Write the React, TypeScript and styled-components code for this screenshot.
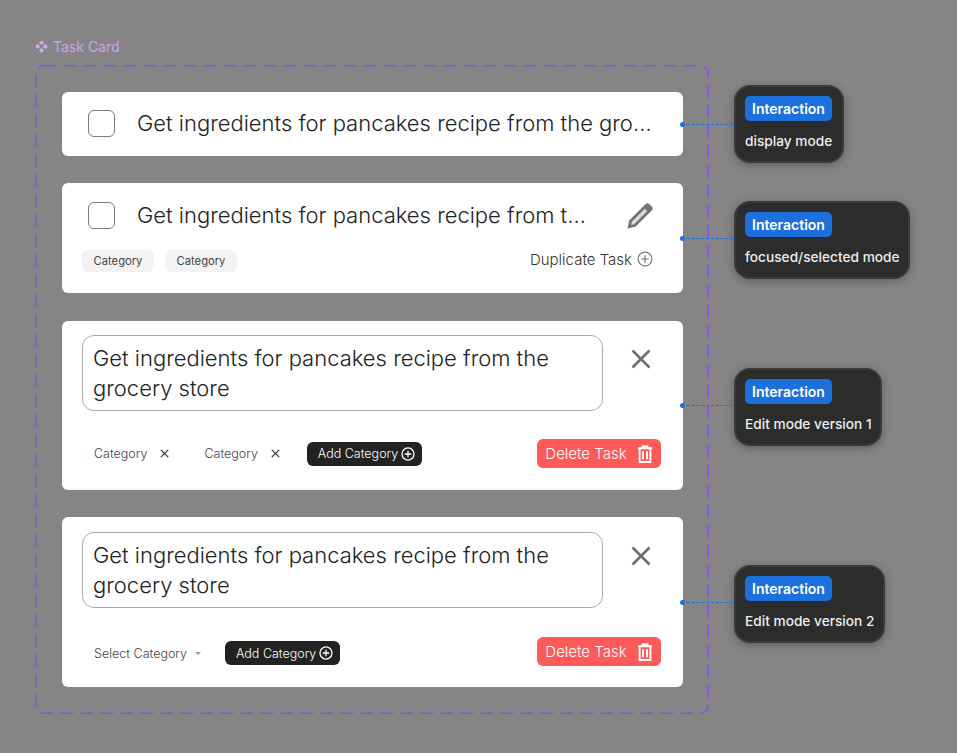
import React from "react";
import styled, { createGlobalStyle } from "styled-components";

const TITLE = "Get ingredients for pancakes recipe from the grocery store";

const GlobalStyle = createGlobalStyle`
  html, body {
    margin: 0;
    padding: 0;
    background: #858585;
    font-family: "Inter", "Liberation Sans", sans-serif;
  }
`;

const PencilIcon = () => (
  <svg width="26" height="26" viewBox="2 2.5 22 22" fill="none">
    <path d="M2.5 24l1.3-6.6L17.6 3.6a2.4 2.4 0 0 1 3.4 0l1.9 1.9a2.4 2.4 0 0 1 0 3.4L9.1 22.7z" fill="#737373" />
    <path d="M5.6 20.9l.5-2.6L17 7.4l2 2L8.1 20.4z" fill="#fff" opacity="0.75" />
  </svg>
);

const CloseIcon = () => (
  <svg width="20" height="20" viewBox="0 0 20 20" fill="none">
    <path d="M1.5 1.5l17 17M18.5 1.5l-17 17" stroke="#6f6f6f" strokeWidth="2.6" />
  </svg>
);

const SmallCloseIcon = () => (
  <svg width="9" height="9" viewBox="0 0 9 9" fill="none">
    <path d="M.8.8l7.4 7.4M8.2.8L.8 8.2" stroke="#333" strokeWidth="1.2" />
  </svg>
);

const PlusCircle = ({ size, color, weight }: { size: number; color: string; weight: number }) => (
  <svg width={size} height={size} viewBox="0 0 16 16" fill="none">
    <circle cx="8" cy="8" r="6.9" stroke={color} strokeWidth={weight} />
    <path d="M8 4.2v7.6M4.2 8h7.6" stroke={color} strokeWidth={weight} />
  </svg>
);

const TrashIcon = () => (
  <svg width="16" height="18" viewBox="0 0 16 18" fill="none">
    <path d="M1 3.2h14M5.5 3V1.2h5V3M2.6 3.2V17h10.8V3.2M6 6.2v8M10 6.2v8" stroke="#fff" strokeWidth="1.9" />
  </svg>
);

const ComponentIcon = () => (
  <svg width="13" height="13" viewBox="0 0 13 13" fill="#cfa8f2">
    <path d="M6.5.2l2.2 2a.6.6 0 0 1 0 .9l-2.2 2.1-2.2-2.1a.6.6 0 0 1 0-.9zM6.5 7.8l2.2 2.1a.6.6 0 0 1 0 .9l-2.2 2-2.2-2a.6.6 0 0 1 0-.9zM2.7 4l2.2 2.1a.6.6 0 0 1 0 .8L2.7 9 .5 6.9a.6.6 0 0 1 0-.8zM10.3 4l2.2 2.1a.6.6 0 0 1 0 .8L10.3 9 8.1 6.9a.6.6 0 0 1 0-.8z" />
  </svg>
);

const App: React.FC = () => {
  return (
    <Page>
      <GlobalStyle />
      <FrameLabel>
        <ComponentIcon />
        Task Card
      </FrameLabel>
      <Frame>
        <DashedOutline>
          <rect
            x="0.75"
            y="0.75"
            width="672.5"
            height="647.5"
            rx="8"
            fill="none"
            stroke="#8a4fe8"
            strokeWidth="1.5"
            strokeDasharray="13 7"
          />
        </DashedOutline>

        <Row>
          <Card $height={64}>
            <TitleRow $padding="18px 21px 0 26px">
              <Checkbox />
              <Title>{TITLE}</Title>
            </TitleRow>
          </Card>
          <Note title="display mode" shift={0} />
        </Row>

        <Row $extraGap={1}>
          <Card $height={110}>
            <TitleRow $padding="19px 30px 0 26px">
              <Checkbox />
              <Title>{TITLE}</Title>
              <EditButton>
                <PencilIcon />
              </EditButton>
            </TitleRow>
            <ChipRow>
              <Chip>Category</Chip>
              <Chip>Category</Chip>
              <Duplicate>
                Duplicate Task
                <PlusCircle size={16} color="#757575" weight={1.2} />
              </Duplicate>
            </ChipRow>
          </Card>
          <Note title="focused/selected mode" shift={2} />
        </Row>

        <Row>
          <Card $height={169}>
            <EditRow $top={14}>
              <TitleInput>{TITLE}</TitleInput>
              <CloseButton>
                <CloseIcon />
              </CloseButton>
            </EditRow>
            <ActionRow $top={28}>
              <Category>
                Category
                <SmallCloseIcon />
              </Category>
              <Category>
                Category
                <SmallCloseIcon />
              </Category>
              <AddButton>
                Add Category
                <PlusCircle size={14} color="#fff" weight={1.5} />
              </AddButton>
              <DeleteButton>
                Delete Task
                <TrashIcon />
              </DeleteButton>
            </ActionRow>
          </Card>
          <Note title="Edit mode version 1" shift={1} />
        </Row>

        <Row>
          <Card $height={170}>
            <EditRow $top={15}>
              <TitleInput>{TITLE}</TitleInput>
              <CloseButton>
                <CloseIcon />
              </CloseButton>
            </EditRow>
            <ActionRow $top={29}>
              <SelectCategory>
                Select Category
                <Caret />
              </SelectCategory>
              <AddButton $drop={3}>
                Add Category
                <PlusCircle size={14} color="#fff" weight={1.5} />
              </AddButton>
              <DeleteButton>
                Delete Task
                <TrashIcon />
              </DeleteButton>
            </ActionRow>
          </Card>
          <Note title="Edit mode version 2" shift={2} />
        </Row>
      </Frame>
    </Page>
  );
};

const Note: React.FC<{ title: string; shift: number }> = ({ title, shift }) => (
  <>
    <Connector />
    <Callout $shift={shift}>
      <Badge>Interaction</Badge>
      <CalloutText>{title}</CalloutText>
    </Callout>
  </>
);

const Page = styled.div`
  width: 957px;
  height: 753px;
  padding: 38px 0 0 35px;
  box-sizing: border-box;
  overflow: hidden;
`;
const FrameLabel = styled.div`
  display: flex;
  align-items: center;
  gap: 5px;
  height: 17px;
  margin-bottom: 10px;
  color: #c9a3ee;
  font-size: 14px;
`;
const Frame = styled.div`
  position: relative;
  width: 674px;
  height: 649px;
  box-sizing: border-box;
  padding: 27px;
  display: flex;
  flex-direction: column;
  gap: 27px;
`;
const DashedOutline = styled.svg`
  position: absolute;
  inset: 0;
  width: 674px;
  height: 649px;
`;
const Row = styled.div<{ $extraGap?: number }>`
  position: relative;
  display: flex;
  align-items: center;
  width: 860px;
  margin-bottom: ${(p) => p.$extraGap ?? 0}px;
`;
const Card = styled.div<{ $height: number }>`
  flex: none;
  width: 621px;
  height: ${(p) => p.$height}px;
  box-sizing: border-box;
  background: #fff;
  border-radius: 6px;
  overflow: hidden;
`;
const TitleRow = styled.div<{ $padding: string }>`
  display: flex;
  align-items: center;
  padding: ${(p) => p.$padding};
`;
const Checkbox = styled.div`
  flex: none;
  width: 27px;
  height: 27px;
  box-sizing: border-box;
  border: 1.5px solid #7a7a7a;
  border-radius: 6px;
  margin-right: 22px;
`;
const Title = styled.div`
  flex: 1;
  min-width: 0;
  white-space: nowrap;
  overflow: hidden;
  text-overflow: ellipsis;
  color: #222;
  font-size: 22px;
  font-weight: 350;
  line-height: 27px;
`;
const EditButton = styled.div`
  flex: none;
  display: flex;
  margin-left: 30px;
`;
const ChipRow = styled.div`
  display: flex;
  align-items: center;
  gap: 11px;
  padding: 21px 30px 0 20px;
`;
const Chip = styled.div`
  display: flex;
  align-items: center;
  justify-content: center;
  width: 72px;
  height: 22px;
  background: #f3f3f3;
  border-radius: 6px;
  color: #444;
  font-size: 11.2px;
`;
const Duplicate = styled.div`
  margin-left: auto;
  margin-top: -4px;
  display: flex;
  align-items: center;
  gap: 5px;
  color: #333;
  font-size: 15px;
  font-weight: 350;
`;
const EditRow = styled.div<{ $top: number }>`
  display: flex;
  align-items: flex-start;
  padding: ${(p) => p.$top}px 0 0 20px;
`;
const TitleInput = styled.div`
  flex: none;
  width: 521px;
  height: 76px;
  box-sizing: border-box;
  padding: 7px 10px;
  border: 1px solid #aaa;
  border-radius: 12px;
  color: #222;
  font-size: 22px;
  font-weight: 350;
  line-height: 30px;
`;
const CloseButton = styled.div`
  display: flex;
  margin: 14px 0 0 28px;
`;
const ActionRow = styled.div<{ $top: number }>`
  display: flex;
  align-items: center;
  padding: ${(p) => p.$top}px 22px 0 32px;
`;
const Category = styled.div`
  display: flex;
  align-items: center;
  gap: 13px;
  margin-right: 35px;
  color: #444;
  font-size: 12.5px;
  font-weight: 350;
  &:nth-child(2) {
    margin-right: 27px;
  }
`;
const SelectCategory = styled.div`
  display: flex;
  align-items: center;
  gap: 8px;
  margin-top: 3px;
  margin-right: 24px;
  color: #444;
  font-size: 12.5px;
  font-weight: 350;
`;
const Caret = styled.span`
  width: 0;
  height: 0;
  border-left: 3px solid transparent;
  border-right: 3px solid transparent;
  border-top: 3px solid #999;
`;
const AddButton = styled.div<{ $drop?: number }>`
  display: flex;
  align-items: center;
  gap: 3px;
  width: 115px;
  height: 24px;
  box-sizing: border-box;
  margin-top: ${(p) => p.$drop ?? 0}px;
  padding-left: 11px;
  background: #222;
  border-radius: 6px;
  color: #fff;
  font-size: 12.5px;
  font-weight: 350;
`;
const DeleteButton = styled.div`
  margin-left: auto;
  display: flex;
  align-items: center;
  justify-content: center;
  gap: 10px;
  width: 124px;
  height: 29px;
  background: #ff5a5a;
  border-radius: 6px;
  color: #fff;
  font-size: 15px;
  font-weight: 350;
`;
const Connector = styled.div`
  position: relative;
  flex: none;
  width: 51px;
  height: 0;
  margin-left: -1px;
  border-top: 1px dashed #1d6fdc;
  &::before {
    content: "";
    position: absolute;
    left: -2px;
    top: -3px;
    width: 5px;
    height: 5px;
    border-radius: 50%;
    background: #1d6fdc;
  }
`;
const Callout = styled.div<{ $shift: number }>`
  flex: none;
  min-width: 110px;
  height: 78px;
  margin: ${(p) => p.$shift - 8}px 0 ${(p) => -8 - p.$shift}px 1px;
  box-sizing: border-box;
  padding: 9px 8.5px 0 9px;
  background: #2c2c2c;
  border: 2px solid #3a3a3a;
  border-radius: 16px;
  box-shadow: 0 2px 8px rgba(0, 0, 0, 0.3);
`;
const Badge = styled.div`
  display: flex;
  align-items: center;
  justify-content: center;
  width: 87px;
  height: 25px;
  background: #1d6fdc;
  border-radius: 5px;
  color: #fff;
  font-size: 14px;
  font-weight: 600;
`;
const CalloutText = styled.div`
  margin-top: 12px;
  color: #eee;
  font-size: 13.7px;
  font-weight: 500;
  line-height: 17px;
  white-space: nowrap;
`;

export default App;
